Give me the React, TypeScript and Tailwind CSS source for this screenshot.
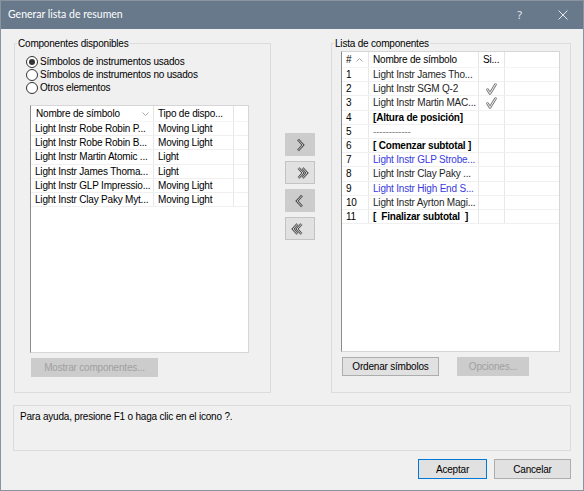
import React from "react";

const F = "font-['Liberation_Sans',Arial,sans-serif] text-[10px] tracking-[-0.2px]";

function Chevron({ dir, double, bg }: { dir: "r" | "l"; double?: boolean; bg: string }) {
  let d = "";
  if (dir === "r") {
    d = double ? "M3.5 2 L8 7 L3.5 12 M7.5 2 L12 7 L7.5 12" : "M5 1.5 L10 7 L5 12.5";
  } else {
    d = double ? "M6.5 2 L2 7 L6.5 12 M10.5 2 L6 7 L10.5 12" : "M9 1.5 L4 7 L9 12.5";
  }
  return (
    <svg width="14" height="14" viewBox="0 0 14 14">
      <path d={d} fill="none" stroke="#4a4a4a" strokeWidth="2.6" strokeLinejoin="miter" strokeLinecap="butt" />
      <path d={d} fill="none" stroke={bg} strokeWidth="0.9" strokeLinejoin="miter" strokeLinecap="butt" />
    </svg>
  );
}

function Check() {
  const d = "M1.5 6.5 L4 10.5 L9.5 1.5";
  return (
    <svg width="11" height="12" viewBox="0 0 11 12">
      <path d={d} fill="none" stroke="#7a7a7a" strokeWidth="2.6" strokeLinecap="round" strokeLinejoin="round" />
      <path d={d} fill="none" stroke="#ffffff" strokeWidth="0.9" strokeLinecap="round" strokeLinejoin="round" />
    </svg>
  );
}

function Radio({ checked, label }: { checked?: boolean; label: string }) {
  return (
    <div className="flex items-center h-[13px]">
      <div className="w-[12px] h-[12px] rounded-full border border-[#333333] bg-white flex items-center justify-center">
        {checked && <div className="w-[6px] h-[6px] rounded-full bg-[#333333]" />}
      </div>
      <span className="ml-[2px] text-[#000000] leading-[13px]">{label}</span>
    </div>
  );
}

const leftRows = [
  ["Light Instr Robe Robin P...", "Moving Light"],
  ["Light Instr Robe Robin B...", "Moving Light"],
  ["Light Instr Martin Atomic ...", "Light"],
  ["Light Instr James Thoma...", "Light"],
  ["Light Instr GLP Impressio...", "Moving Light"],
  ["Light Instr Clay Paky Myt...", "Moving Light"],
];

type RRow = { n: string; name: string; kind?: "bold" | "blue" | "dash"; check?: boolean };
const rightRows: RRow[] = [
  { n: "1", name: "Light Instr James Tho..." },
  { n: "2", name: "Light Instr SGM Q-2", check: true },
  { n: "3", name: "Light Instr Martin MAC...", check: true },
  { n: "4", name: "[Altura de posición]", kind: "bold" },
  { n: "5", name: "------------", kind: "dash" },
  { n: "6", name: "[ Comenzar subtotal ]", kind: "bold" },
  { n: "7", name: "Light Instr GLP Strobe...", kind: "blue" },
  { n: "8", name: "Light Instr Clay Paky ..." },
  { n: "9", name: "Light Instr High End S...", kind: "blue" },
  { n: "10", name: "Light Instr Ayrton Magi..." },
  { n: "11", name: "[  Finalizar subtotal  ]", kind: "bold" },
];

function GroupLabel({ text }: { text: string }) {
  return (
    <div className="-mt-[7px] ml-[2px] px-[1px] w-fit bg-[#f0f0f0] leading-[13px] text-[#000000] whitespace-pre">
      {text}
    </div>
  );
}

export default function App() {
  return (
    <div className={`w-[584px] h-[491px] border border-[#8a939e] bg-[#f0f0f0] flex flex-col ${F}`}>
      {/* Title bar */}
      <div className="h-[28px] bg-[#68798c] flex items-center shrink-0">
        <span className="ml-[7px] font-['Lato',sans-serif] text-[10.5px] tracking-normal text-white">
          Generar lista de resumen
        </span>
        <span className="ml-auto mr-[36px] font-['Noto_Sans',sans-serif] text-[11px] tracking-normal text-[#e4e8ee]">?</span>
        <svg width="10" height="10" viewBox="0 0 10 10" className="mr-[15px]">
          <path d="M0.5 0.5 L9.5 9.5 M9.5 0.5 L0.5 9.5" stroke="#e4e8ee" strokeWidth="1" />
        </svg>
      </div>

      {/* Body */}
      <div className="px-[12px] flex flex-col">
        <div className="mt-[14px] flex">
          {/* Left group */}
          <div className="ml-px w-[257px] h-[350px] border border-[#dcdcdc] flex flex-col">
            <GroupLabel text="Componentes disponibles" />
            <div className="mt-[5px] pl-[11px] flex flex-col">
              <Radio checked label="Símbolos de instrumentos usados" />
              <Radio label="Símbolos de instrumentos no usados" />
              <Radio label="Otros elementos" />
            </div>
            <div className="mt-[11px] ml-[15px] w-[219px] h-[248px] bg-white border border-[#d6d6d6] border-l-[#8c8c8c] flex flex-col">
              <div className="h-[16px] flex border-b border-[#f4f4f4] text-[#000000]">
                <div className="w-[123px] border-r border-[#e5e5e5] pl-[5px] pr-[4px] flex items-center">
                  <span>Nombre de símbolo</span>
                  <svg width="7" height="4" viewBox="0 0 7 4" className="ml-auto">
                    <path d="M0.5 0.5 L3.5 3.5 L6.5 0.5" fill="none" stroke="#a8a8a8" strokeWidth="1" />
                  </svg>
                </div>
                <div className="w-[80px] border-r border-[#e5e5e5] pl-[4px] flex items-center">Tipo de dispo...</div>
                <div className="flex-1" />
              </div>
              {leftRows.map((r, i) => (
                <div key={i} className="h-[14.2px] flex border-b border-[#f0f0f0] text-[#000000] leading-[13px]">
                  <div className="w-[123px] border-r border-[#e8e8e8] pl-[4px] overflow-hidden whitespace-nowrap">{r[0]}</div>
                  <div className="w-[80px] border-r border-[#e8e8e8] pl-[4px] overflow-hidden whitespace-nowrap">{r[1]}</div>
                  <div className="flex-1" />
                </div>
              ))}
            </div>
            <button className="mt-[5px] ml-[16px] w-[127px] h-[19px] bg-[#cccccc] text-[#a0a0a0] flex items-center justify-center">
              Mostrar componentes...
            </button>
          </div>

          {/* Middle arrow buttons */}
          <div className="w-[60px] pt-[90px] pl-[14px] flex flex-col gap-[5px]">
            <button className="w-[30px] h-[23px] bg-[#cccccc] flex items-center justify-center">
              <Chevron dir="r" bg="#cccccc" />
            </button>
            <button className="w-[30px] h-[23px] bg-[#e1e1e1] border border-[#c4c4c4] flex items-center justify-center">
              <span className="ml-[3px] flex"><Chevron dir="r" double bg="#e1e1e1" /></span>
            </button>
            <button className="w-[30px] h-[23px] bg-[#cccccc] flex items-center justify-center">
              <Chevron dir="l" bg="#cccccc" />
            </button>
            <button className="w-[30px] h-[23px] bg-[#e1e1e1] border border-[#c4c4c4] flex items-center justify-center">
              <span className="mr-[4px] flex"><Chevron dir="l" double bg="#e1e1e1" /></span>
            </button>
          </div>

          {/* Right group */}
          <div className="w-[240px] h-[350px] border border-[#dcdcdc] flex flex-col">
            <GroupLabel text="Lista de componentes" />
            <div className="mt-[1px] ml-[9px] w-[219px] h-[301px] bg-white border border-[#d6d6d6] border-l-[#8c8c8c] flex flex-col">
              <div className="h-[16px] flex border-b border-[#f4f4f4] text-[#000000]">
                <div className="w-[27px] border-r border-[#e5e5e5] pl-[4px] flex items-center">
                  <span>#</span>
                  <svg width="7" height="4" viewBox="0 0 7 4" className="ml-[5px]">
                    <path d="M0.5 3.5 L3.5 0.5 L6.5 3.5" fill="none" stroke="#a8a8a8" strokeWidth="1" />
                  </svg>
                </div>
                <div className="w-[110px] border-r border-[#e5e5e5] pl-[4px] flex items-center">Nombre de símbolo</div>
                <div className="w-[26px] border-r border-[#e5e5e5] pl-[4px] flex items-center">Si...</div>
                <div className="flex-1" />
              </div>
              {rightRows.map((r, i) => {
                const cls =
                  r.kind === "bold"
                    ? "font-bold text-[#000000]"
                    : r.kind === "blue"
                    ? "text-[#3a3ae0]"
                    : r.kind === "dash"
                    ? "text-[#8a8a8a]"
                    : "text-[#1e1e1e]";
                return (
                  <div key={i} className="h-[14.2px] flex border-b border-[#f0f0f0] leading-[13px]">
                    <div className="w-[27px] border-r border-[#e8e8e8] pl-[4px] font-normal text-[#000000]">{r.n}</div>
                    <div className={`w-[110px] border-r border-[#e8e8e8] pl-[4px] overflow-hidden whitespace-pre ${cls}`}>{r.name}</div>
                    <div className="w-[26px] border-r border-[#e8e8e8] flex items-center justify-center">
                      {r.check && <Check />}
                    </div>
                    <div className="flex-1" />
                  </div>
                );
              })}
            </div>
            <div className="mt-[5px] ml-[10px] flex gap-[18px]">
              <button className="w-[97px] h-[19px] bg-[#e1e1e1] border border-[#adadad] text-[#000000] flex items-center justify-center">
                Ordenar símbolos
              </button>
              <button className="w-[72px] h-[19px] bg-[#cccccc] text-[#a0a0a0] flex items-center justify-center">
                Opciones...
              </button>
            </div>
          </div>
        </div>

        {/* Help box */}
        <div className="mt-[12px] h-[46px] border border-[#dcdcdc] pl-[6px] pt-[4px] text-[#000000] leading-[13px]">
          Para ayuda, presione F1 o haga clic en el icono ?.
        </div>

        {/* Bottom buttons */}
        <div className="mt-[8px] flex justify-end gap-[7px]">
          <button className="w-[69px] h-[20px] bg-[#e1e1e1] border border-[#0078d7] text-[#000000] flex items-center justify-center">
            Aceptar
          </button>
          <button className="w-[77px] h-[20px] bg-[#e1e1e1] border border-[#adadad] text-[#000000] flex items-center justify-center">
            Cancelar
          </button>
        </div>
      </div>
    </div>
  );
}
